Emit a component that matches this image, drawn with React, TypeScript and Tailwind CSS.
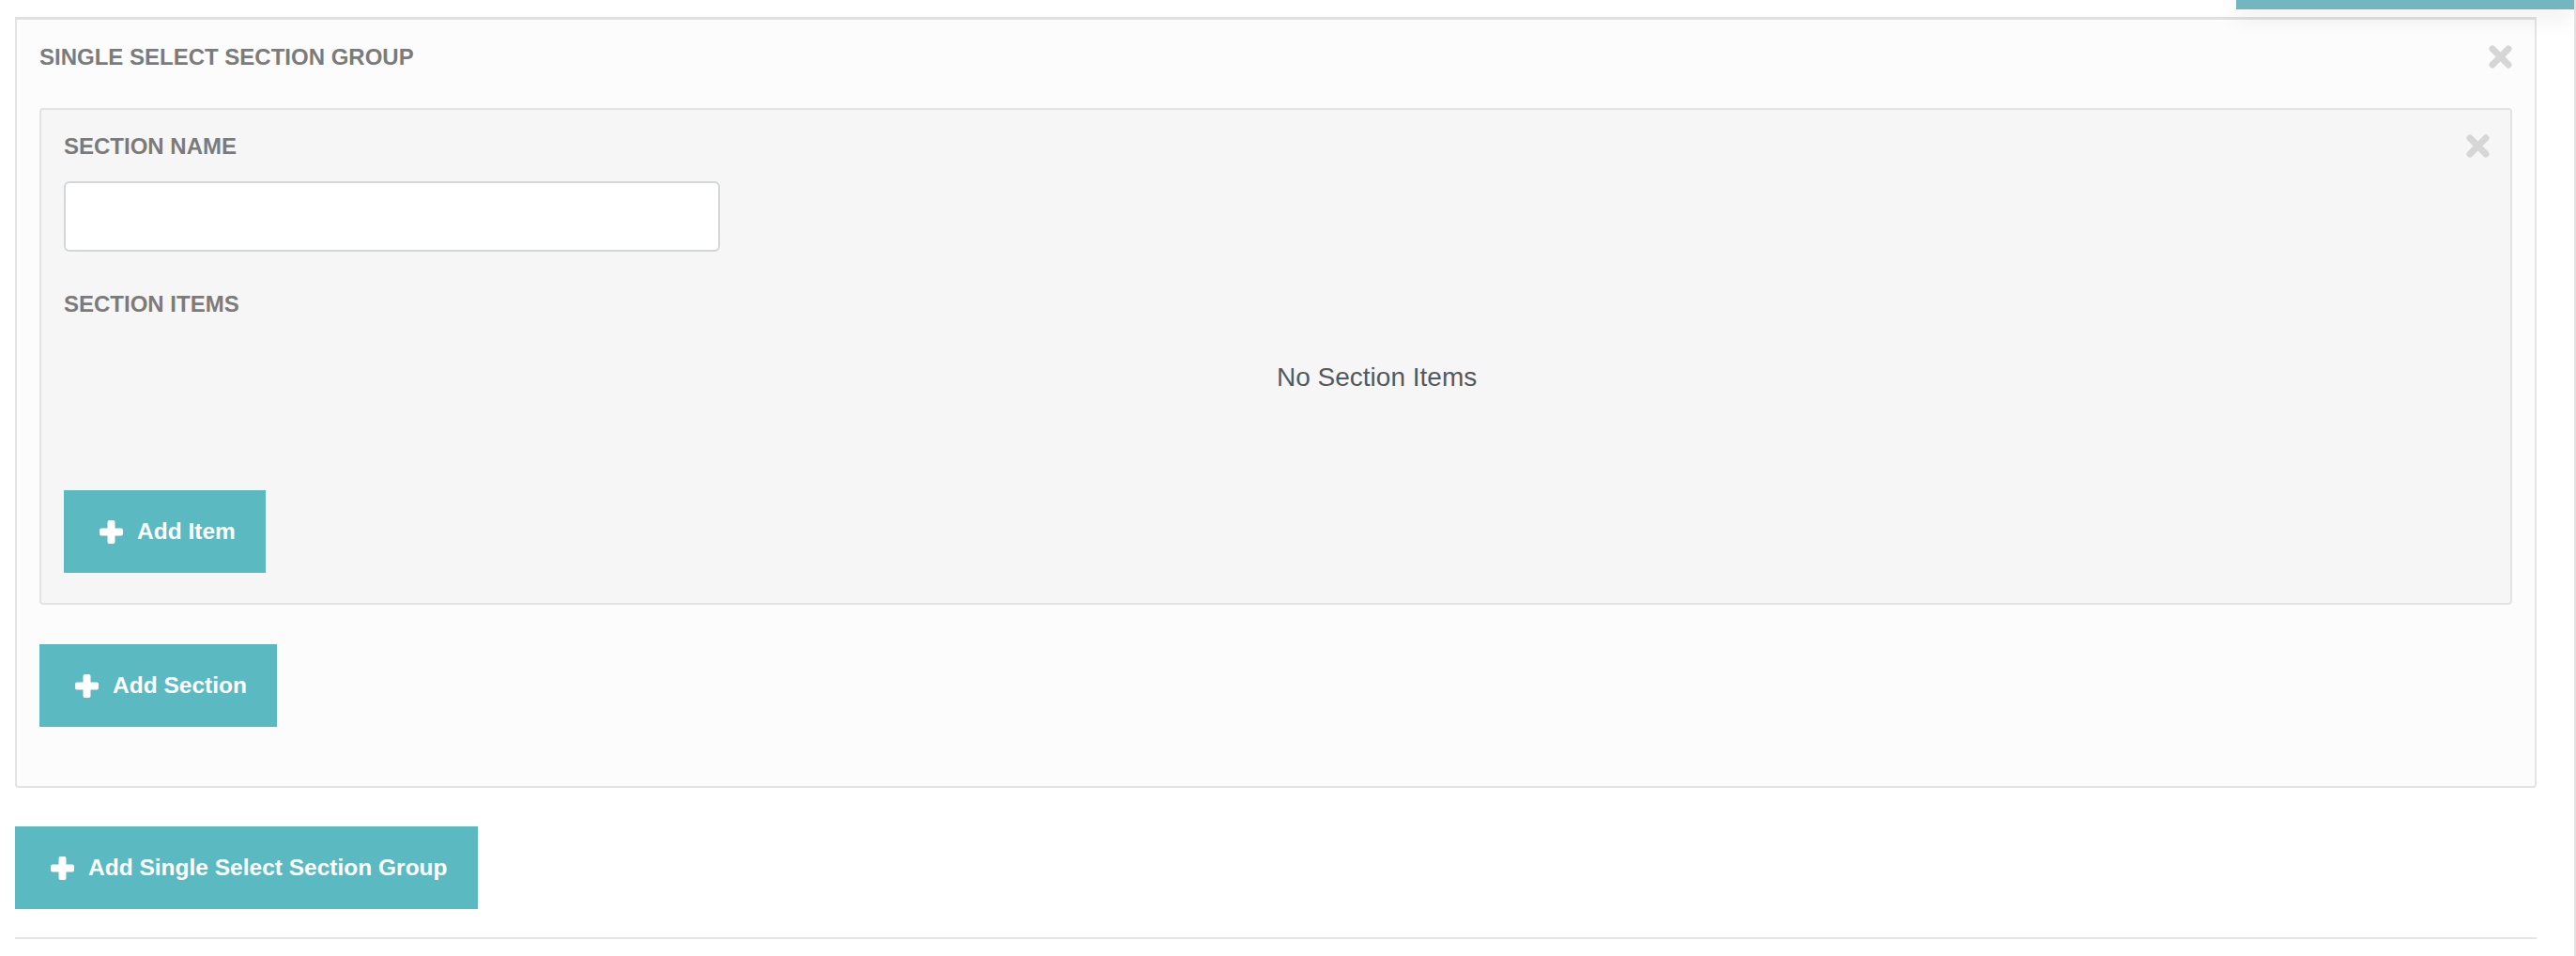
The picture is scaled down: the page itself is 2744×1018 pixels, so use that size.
const boldFont = {
  fontFamily: "'Liberation Sans', Arial, sans-serif",
};

const PlusIcon = () => (
  <svg width="25" height="25" viewBox="0 0 25 25" className="shrink-0">
    <rect x="8.5" y="0" width="8" height="25" rx="2" fill="#ffffff" />
    <rect x="0" y="8.5" width="25" height="8" rx="2" fill="#ffffff" />
  </svg>
);

const CloseIcon = () => (
  <svg width="25" height="25" viewBox="0 0 25 25" className="shrink-0">
    <path d="M4 4 L21 21 M21 4 L4 21" stroke="#d6d6d6" strokeWidth="7" strokeLinecap="round" />
  </svg>
);

const AddButton = ({ label }: { label: string }) => (
  <button
    type="button"
    className="flex h-[88px] items-center gap-[15px] bg-[#5bb9c1] pl-[38px] pr-[32px] text-[24.5px] font-bold leading-none text-white"
    style={boldFont}
  >
    <PlusIcon />
    <span>{label}</span>
  </button>
);

const Label = ({ children }: { children: string }) => (
  <div className="text-[24px] font-bold leading-none text-[#7b7b7b]" style={boldFont}>
    {children}
  </div>
);

export default function App() {
  return (
    <div className="relative h-[1018px] w-[2744px] overflow-hidden border-r-2 border-[#e2e2e2] bg-white">
      {/* floating save button cut off at the top */}
      <div className="absolute right-0 top-0 h-[10px] w-[360px] bg-[#73b6bf] shadow-[0_6px_24px_rgba(0,0,0,0.12)]" />

      <div className="ml-[16px] w-[2686px]">
        <div className="mt-[18px] h-[3px] bg-[#e0e0e0]" />

        {/* section group */}
        <div className="rounded-b-[4px] border-2 border-t-0 border-[#e4e4e4] bg-[#fcfcfc] px-[24px] pb-[63px] pt-[27px]">
          <div className="flex items-center justify-between">
            <Label>SINGLE SELECT SECTION GROUP</Label>
            <CloseIcon />
          </div>

          {/* section */}
          <div className="mt-[42px] rounded-[4px] border-2 border-[#e3e3e3] bg-[#f6f6f6] pb-[32px] pl-[24px] pr-[22px] pt-[26px]">
            <div className="flex items-center justify-between">
              <Label>SECTION NAME</Label>
              <CloseIcon />
            </div>
            <input
              type="text"
              className="mt-[25px] block h-[75px] w-[699px] rounded-[6px] border-2 border-[#d3d7da] bg-white px-4 text-[28px] outline-none"
            />
            <div className="mt-[44px]">
              <Label>SECTION ITEMS</Label>
            </div>
            <div
              className="mt-[52px] pl-[1292px] text-[28px] leading-none text-[#55595d]"
              style={{ fontFamily: "'Liberation Sans', Arial, sans-serif" }}
            >
              No Section Items
            </div>
            <div className="mt-[106px] flex">
              <AddButton label="Add Item" />
            </div>
          </div>

          <div className="mt-[42px] flex">
            <AddButton label="Add Section" />
          </div>
        </div>

        <div className="mt-[41px] flex">
          <AddButton label="Add Single Select Section Group" />
        </div>

        <div className="mt-[30px] h-[2px] bg-[#e5e5e5]" />
      </div>
    </div>
  );
}
